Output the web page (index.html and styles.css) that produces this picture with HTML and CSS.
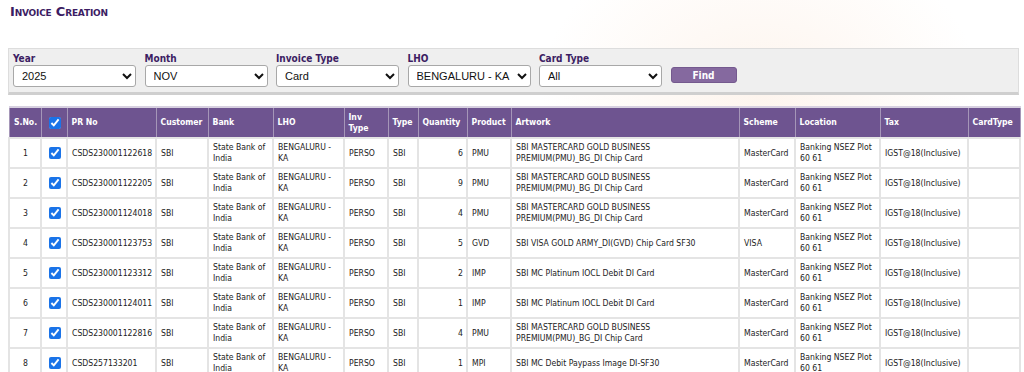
FILE: index.html
```html
<!DOCTYPE html>
<html>
<head>
  <meta charset="UTF-8">
  <title>Invoice Creation</title>
  <link rel="stylesheet" href="styles.css">
</head>
<body>
  <h1 class="page-title">Invoice Creation</h1>

  <div class="filters">
    <div class="filter-item">
      <label for="year">Year</label>
      <select id="year"><option>2025</option></select>
    </div>
    <div class="filter-item">
      <label for="month">Month</label>
      <select id="month"><option>NOV</option></select>
    </div>
    <div class="filter-item">
      <label for="invType">Invoice Type</label>
      <select id="invType"><option>Card</option></select>
    </div>
    <div class="filter-item">
      <label for="lho">LHO</label>
      <select id="lho"><option>BENGALURU - KA</option></select>
    </div>
    <div class="filter-item">
      <label for="cardType">Card Type</label>
      <select id="cardType"><option>All</option></select>
    </div>
    <button class="find-btn" id="find">Find</button>
  </div>

  <table class="grid">
    <colgroup>
      <col style="width:32px">
      <col style="width:26px">
      <col style="width:89px">
      <col style="width:52px">
      <col style="width:65px">
      <col style="width:71px">
      <col style="width:44px">
      <col style="width:30px">
      <col style="width:49px">
      <col style="width:44px">
      <col style="width:228px">
      <col style="width:56px">
      <col style="width:85px">
      <col style="width:88px">
      <col style="width:52px">
    </colgroup>
    <thead>
      <tr>
        <th class="center">S.No.</th>
        <th class="center"><input type="checkbox" checked></th>
        <th>PR No</th>
        <th>Customer</th>
        <th>Bank</th>
        <th>LHO</th>
        <th class="wrap">Inv Type</th>
        <th>Type</th>
        <th>Quantity</th>
        <th>Product</th>
        <th>Artwork</th>
        <th>Scheme</th>
        <th>Location</th>
        <th>Tax</th>
        <th>CardType</th>
      </tr>
    </thead>
    <tbody>
      <tr>
        <td class="center">1</td><td class="center"><input type="checkbox" checked></td>
        <td>CSDS230001122618</td><td>SBI</td><td>State Bank of India</td><td>BENGALURU - KA</td>
        <td>PERSO</td><td>SBI</td><td class="num">6</td><td>PMU</td>
        <td>SBI MASTERCARD GOLD BUSINESS PREMIUM(PMU)_BG_DI Chip Card</td>
        <td>MasterCard</td><td>Banking NSEZ Plot 60 61</td><td>IGST@18(Inclusive)</td><td></td>
      </tr>
      <tr>
        <td class="center">2</td><td class="center"><input type="checkbox" checked></td>
        <td>CSDS230001122205</td><td>SBI</td><td>State Bank of India</td><td>BENGALURU - KA</td>
        <td>PERSO</td><td>SBI</td><td class="num">9</td><td>PMU</td>
        <td>SBI MASTERCARD GOLD BUSINESS PREMIUM(PMU)_BG_DI Chip Card</td>
        <td>MasterCard</td><td>Banking NSEZ Plot 60 61</td><td>IGST@18(Inclusive)</td><td></td>
      </tr>
      <tr>
        <td class="center">3</td><td class="center"><input type="checkbox" checked></td>
        <td>CSDS230001124018</td><td>SBI</td><td>State Bank of India</td><td>BENGALURU - KA</td>
        <td>PERSO</td><td>SBI</td><td class="num">4</td><td>PMU</td>
        <td>SBI MASTERCARD GOLD BUSINESS PREMIUM(PMU)_BG_DI Chip Card</td>
        <td>MasterCard</td><td>Banking NSEZ Plot 60 61</td><td>IGST@18(Inclusive)</td><td></td>
      </tr>
      <tr>
        <td class="center">4</td><td class="center"><input type="checkbox" checked></td>
        <td>CSDS230001123753</td><td>SBI</td><td>State Bank of India</td><td>BENGALURU - KA</td>
        <td>PERSO</td><td>SBI</td><td class="num">5</td><td>GVD</td>
        <td>SBI VISA GOLD ARMY_DI(GVD) Chip Card SF30</td>
        <td>VISA</td><td>Banking NSEZ Plot 60 61</td><td>IGST@18(Inclusive)</td><td></td>
      </tr>
      <tr>
        <td class="center">5</td><td class="center"><input type="checkbox" checked></td>
        <td>CSDS230001123312</td><td>SBI</td><td>State Bank of India</td><td>BENGALURU - KA</td>
        <td>PERSO</td><td>SBI</td><td class="num">2</td><td>IMP</td>
        <td>SBI MC Platinum IOCL Debit DI Card</td>
        <td>MasterCard</td><td>Banking NSEZ Plot 60 61</td><td>IGST@18(Inclusive)</td><td></td>
      </tr>
      <tr>
        <td class="center">6</td><td class="center"><input type="checkbox" checked></td>
        <td>CSDS230001124011</td><td>SBI</td><td>State Bank of India</td><td>BENGALURU - KA</td>
        <td>PERSO</td><td>SBI</td><td class="num">1</td><td>IMP</td>
        <td>SBI MC Platinum IOCL Debit DI Card</td>
        <td>MasterCard</td><td>Banking NSEZ Plot 60 61</td><td>IGST@18(Inclusive)</td><td></td>
      </tr>
      <tr>
        <td class="center">7</td><td class="center"><input type="checkbox" checked></td>
        <td>CSDS230001122816</td><td>SBI</td><td>State Bank of India</td><td>BENGALURU - KA</td>
        <td>PERSO</td><td>SBI</td><td class="num">4</td><td>PMU</td>
        <td>SBI MASTERCARD GOLD BUSINESS PREMIUM(PMU)_BG_DI Chip Card</td>
        <td>MasterCard</td><td>Banking NSEZ Plot 60 61</td><td>IGST@18(Inclusive)</td><td></td>
      </tr>
      <tr>
        <td class="center">8</td><td class="center"><input type="checkbox" checked></td>
        <td>CSDS257133201</td><td>SBI</td><td>State Bank of India</td><td>BENGALURU - KA</td>
        <td>PERSO</td><td>SBI</td><td class="num">1</td><td>MPI</td>
        <td>SBI MC Debit Paypass Image DI-SF30</td>
        <td>MasterCard</td><td>Banking NSEZ Plot 60 61</td><td>IGST@18(Inclusive)</td><td></td>
      </tr>
    </tbody>
  </table>
</body>
</html>
```

FILE: styles.css
```css
body {
  margin: 0;
  padding: 0 5px 0 8px;
  font-family: Tahoma, "DejaVu Sans Condensed", "Liberation Sans", sans-serif;
  font-size: 8.6px;
  color: #222222;
  background-color: #ffffff;
  background-image: radial-gradient(ellipse 220px 160px at 760px 90px, rgba(250, 225, 205, 0.35), rgba(255, 255, 255, 0));
  background-repeat: no-repeat;
}
.page-title {
  margin: 0;
  padding: 4px 0 0 2px;
  height: 48px;
  box-sizing: border-box;
  font-family: "DejaVu Sans", sans-serif;
  font-size: 13px;
  font-weight: bold;
  font-variant: small-caps;
  letter-spacing: -0.2px;
  color: #3c1d63;
}
.filters {
  display: flex;
  align-items: flex-end;
  gap: 8.5px;
  padding: 4px 4px 5px;
  background-color: #efefef;
  border: 1px solid #dddddd;
  border-bottom: 3px solid #cfcfcf;
}
.filter-item {
  display: flex;
  flex-direction: column;
  gap: 1px;
}
.filter-item label {
  font-family: "DejaVu Sans Condensed", "DejaVu Sans", sans-serif;
  font-size: 10px;
  font-weight: bold;
  color: #3c1d63;
}
.filter-item select {
  width: 123px;
  height: 22px;
  padding: 0 4px;
  font-family: "Liberation Sans", Arial, sans-serif;
  font-size: 11px;
  color: #111111;
  background-color: #ffffff;
  border: 1px solid #a8a8a8;
  border-radius: 3px;
}
.find-btn {
  width: 66px;
  height: 16px;
  margin-bottom: 4px;
  padding: 0;
  font-family: "DejaVu Sans Condensed", "DejaVu Sans", sans-serif;
  font-size: 10px;
  font-weight: bold;
  color: #ffffff;
  background-color: #85699f;
  border: 1px solid #74598e;
  border-radius: 3px;
}
.grid {
  margin-top: 11px;
  width: 1011px;
  table-layout: fixed;
  border-collapse: collapse;
  line-height: 11px;
}
.grid th,
.grid td {
  padding: 3px 3px 3px 4px;
  vertical-align: middle;
  text-align: left;
}
.grid th {
  height: 23px;
  white-space: nowrap;
  color: #ffffff;
  font-weight: bold;
  background-color: #6e5490;
  border: 1px solid #a596b8;
  border-top: 2px solid #d7d0e0;
}
.grid th.wrap {
  white-space: normal;
}
.grid td {
  height: 22px;
  background-color: #ffffff;
  border: 2px solid #e4e4e4;
}
.grid .center {
  text-align: center;
}
.grid .num {
  text-align: right;
}
.grid input[type="checkbox"] {
  width: 12px;
  height: 12px;
  margin: 0;
  vertical-align: middle;
  accent-color: #1a73e8;
}
```
